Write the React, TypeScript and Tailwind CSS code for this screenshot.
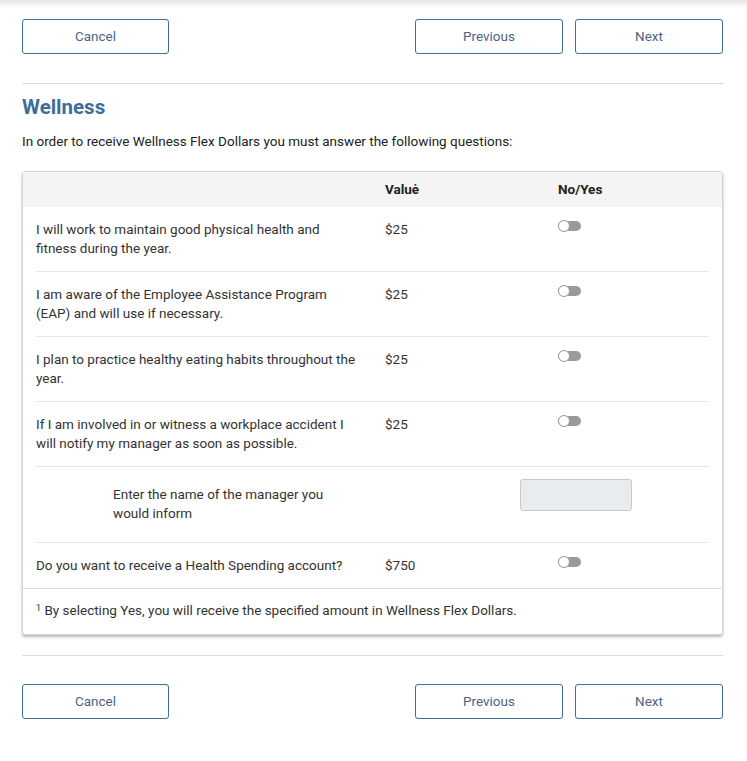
const rows = [
  { q: "I will work to maintain good physical health and fitness during the year.", v: "$25" },
  { q: "I am aware of the Employee Assistance Program (EAP) and will use if necessary.", v: "$25" },
  { q: "I plan to practice healthy eating habits throughout the year.", v: "$25" },
  { q: "If I am involved in or witness a workplace accident I will notify my manager as soon as possible.", v: "$25" },
];

function NavButtons() {
  const btn =
    "h-[35px] rounded-[3px] border border-[#3b6e98] bg-white text-[13.5px] text-[#4a6585]";
  return (
    <div className="flex items-center">
      <button className={`${btn} w-[147px]`}>Cancel</button>
      <div className="ml-auto flex gap-3">
        <button className={`${btn} w-[148px]`}>Previous</button>
        <button className={`${btn} w-[148px]`}>Next</button>
      </div>
    </div>
  );
}

function Toggle() {
  return (
    <span className="relative mt-[1px] block h-[10px] w-[23px] rounded-full bg-[#9a9a9a]">
      <span className="absolute left-0 top-[-1px] h-[12px] w-[12px] rounded-full border border-[#9a9a9a] bg-white" />
    </span>
  );
}

export default function App() {
  return (
    <div className="min-h-[761px] bg-white font-['Roboto',sans-serif] text-[13.5px] text-[#333]">
      <div className="h-[8px] bg-linear-to-b from-[#e4e4e4] to-white" />
      <div className="pl-[22px] pr-[24px] pt-[11px]">
        <NavButtons />
        <div className="mt-[29px] h-px bg-[#dddddd]" />
        <h2 className="mt-[11px] text-[20.5px] font-bold leading-[24px] text-[#3d6e99]">Wellness</h2>
        <p className="mt-[13px] leading-[19px] text-[#222]">
          In order to receive Wellness Flex Dollars you must answer the following questions:
        </p>

        <div className="mt-[20px] rounded-[3px] border border-[#d4d4d4] shadow-[0_2px_3px_rgba(0,0,0,0.28)]">
          <div className="grid h-[35px] grid-cols-[349px_173px_1fr] items-center bg-[#f4f4f4] px-[13px] font-bold text-[#222]">
            <span />
            <span>Valuė</span>
            <span>No/Yes</span>
          </div>
          <div className="px-[13px]">
            {rows.map((r) => (
              <div
                key={r.q}
                className="grid grid-cols-[349px_173px_1fr] border-b border-[#e6e6e6] pb-[13px] pt-[13px] leading-[19px]"
              >
                <span className="pr-[24px]">{r.q}</span>
                <span>{r.v}</span>
                <span>
                  <Toggle />
                </span>
              </div>
            ))}
            <div className="grid grid-cols-[484px_1fr] border-b border-[#e6e6e6] pb-[19px] pt-[12px] leading-[19px]">
              <span className="box-content w-[240px] pl-[77px] pt-[6px]">
                Enter the name of the manager you would inform
              </span>
              <input
                className="h-[32px] w-[112px] rounded-[3px] border border-[#c8c8c8] bg-[#e9ecef]"
                disabled
              />
            </div>
            <div className="grid grid-cols-[349px_173px_1fr] pb-[13px] pt-[13px] leading-[19px]">
              <span>Do you want to receive a Health Spending account?</span>
              <span>$750</span>
              <span>
                <Toggle />
              </span>
            </div>
          </div>
          <div className="border-t border-[#dedede] px-[13px] pb-[14px] pt-[12px] leading-[19px]">
            <sup className="text-[9px]">1</sup> By selecting Yes, you will receive the specified amount in Wellness Flex Dollars.
          </div>
        </div>

        <div className="mt-[20px] h-px bg-[#dddddd]" />
        <div className="mt-[28px]">
          <NavButtons />
        </div>
      </div>
    </div>
  );
}
